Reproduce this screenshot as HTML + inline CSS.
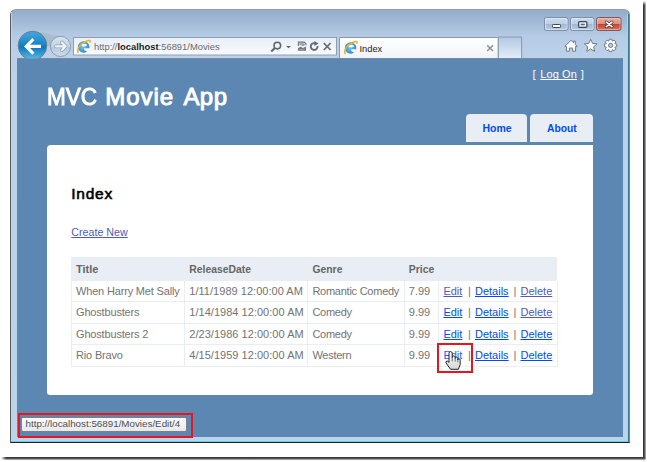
<!DOCTYPE html>
<html><head><meta charset="utf-8">
<style>
*{margin:0;padding:0;box-sizing:border-box}
html,body{width:647px;height:462px;overflow:hidden;background:#fff;font-family:"Liberation Sans",sans-serif}
.a{position:absolute}
.t{position:absolute;white-space:nowrap;line-height:1}
u{text-decoration:underline;text-decoration-skip-ink:none}
#shadowR{left:643px;top:1px;width:3px;height:460px;background:linear-gradient(to right,#2e2e2e 0,#4a4a4a 45%,#c4c4c4 100%);-webkit-mask-image:linear-gradient(to bottom,transparent 0,#000 4px,#000 calc(100% - 3px),transparent 100%)}
#shadowB{left:1px;top:457px;width:645px;height:3px;background:linear-gradient(to bottom,#2e2e2e 0,#4a4a4a 45%,#c4c4c4 100%);-webkit-mask-image:linear-gradient(to right,transparent 0,#000 5px,#000 calc(100% - 3px),transparent 100%)}
#win{left:10px;top:9px;width:620px;height:434px;border:1px solid #5a5a5a;border-top-color:#9a9a9a;border-right-color:#7d8a90;border-bottom-color:#222;border-radius:6px 6px 0 0;
 background:linear-gradient(to bottom,#a4b0bd 0,#93adcb 1px,#a8bfda 16px,#b6cce6 27px,#bcd2ea 48px,#bcd3ec 100%)}
#cyan{left:11px;top:441px;width:618px;height:1px;background:#5fd2ee}
#content{left:17px;top:59px;width:606px;height:378px;background:#5c87b2}
#ctop{left:17px;top:58px;width:606px;height:1px;background:#7689a0}
#main{left:47px;top:145px;width:546px;height:250px;background:#fff;border-radius:4px 0 3px 3px}
.tab{background:#e8eef4;border-radius:4px 4px 0 0}

</style></head><body>
<div class="a" id="shadowR"></div>
<div class="a" id="shadowB"></div>
<div class="a" id="win"></div>
<div class="a" id="cyan"></div>
<div class="a" style="left:11px;top:12px;width:1px;height:429px;background:#c9d0d8"></div>
<div class="a" style="left:628px;top:14px;width:1px;height:428px;background:#2f7d93"></div>
<div class="a" style="left:627px;top:14px;width:1px;height:427px;background:#b0d4ef"></div>
<div class="a" id="ctop"></div>
<div class="a" id="content"></div>
<div class="a" id="main"></div>
<svg class="a" style="left:0;top:0" width="647" height="60" viewBox="0 0 647 60">
 <defs>
  <linearGradient id="gBack" x1="0" y1="0" x2="0" y2="1">
   <stop offset="0" stop-color="#4aa6dc"/><stop offset="0.45" stop-color="#1b86c8"/><stop offset="0.55" stop-color="#0b78c0"/><stop offset="1" stop-color="#5cbde6"/>
  </linearGradient>
  <linearGradient id="gFwd" x1="0" y1="0" x2="0" y2="1">
   <stop offset="0" stop-color="#d8e4f0"/><stop offset="0.5" stop-color="#c3d4e6"/><stop offset="0.55" stop-color="#b4c8de"/><stop offset="1" stop-color="#cfdeee"/>
  </linearGradient>
  <linearGradient id="gAddr" x1="0" y1="0" x2="0" y2="1">
   <stop offset="0" stop-color="#e9eff7"/><stop offset="1" stop-color="#f8fafd"/>
  </linearGradient>
  <linearGradient id="gTab" x1="0" y1="0" x2="0" y2="1">
   <stop offset="0" stop-color="#ffffff"/><stop offset="1" stop-color="#f1f4f8"/>
  </linearGradient>
  <linearGradient id="gNew" x1="0" y1="0" x2="0" y2="1">
   <stop offset="0" stop-color="#b2c9e4"/><stop offset="1" stop-color="#e2ecf7"/>
  </linearGradient>
  <linearGradient id="gBtn" x1="0" y1="0" x2="0" y2="1">
   <stop offset="0" stop-color="#cfdcec"/><stop offset="0.5" stop-color="#bccfe5"/><stop offset="0.52" stop-color="#9fb8d4"/><stop offset="1" stop-color="#b9cde4"/>
  </linearGradient>
  <linearGradient id="gClose" x1="0" y1="0" x2="0" y2="1">
   <stop offset="0" stop-color="#e9b4a6"/><stop offset="0.5" stop-color="#dc8f7c"/><stop offset="0.52" stop-color="#c4432a"/><stop offset="1" stop-color="#dc7a62"/>
  </linearGradient>
  <radialGradient id="gIE" cx="0.45" cy="0.45" r="0.6"><stop offset="0" stop-color="#7cc8f0"/><stop offset="1" stop-color="#1f86d2"/></radialGradient>
  <clipPath id="cTop"><rect x="0" y="0" width="647" height="58.5"/></clipPath>
 </defs>
 <g clip-path="url(#cTop)">
  <!-- connector between back and forward -->
  <path d="M33,31.2 C43,31.3 51,35.5 60.5,36.2 L60.5,46.4 L50.4,46.4 L46.8,45.6 Z" fill="#a9b9cb" opacity="0.9"/>
  <circle cx="60.5" cy="46.4" r="10.1" fill="url(#gFwd)" stroke="#8d9bab" stroke-width="1"/>
  <path d="M56,46.3 H65.5 M61.8,42.4 L65.6,46.3 L61.8,50.2" fill="none" stroke="#8e9eb0" stroke-width="3.6" stroke-linecap="round" stroke-linejoin="round"/>
  <path d="M56,46.3 H65.5 M61.8,42.4 L65.6,46.3 L61.8,50.2" fill="none" stroke="#eef3f8" stroke-width="2.2" stroke-linecap="round" stroke-linejoin="round"/>
  <circle cx="32.5" cy="45.6" r="14.3" fill="url(#gBack)" stroke="#6b7c8e" stroke-width="1"/>
  <path d="M26,46.4 H41 M33.4,39.2 L26.2,46.4 L33.4,53.6" fill="none" stroke="#fff" stroke-width="3.1" stroke-linejoin="miter"/>
 </g>
 <!-- address bar -->
 <rect x="73.5" y="37.5" width="263" height="17.5" fill="url(#gAddr)" stroke="#8f9fb2" stroke-width="1"/>
 <!-- IE icon in addr -->
 <g id="ieico">
  <circle cx="83.6" cy="47" r="5.8" fill="url(#gIE)"/>
  <ellipse cx="84.1" cy="45.1" rx="2.9" ry="1.3" fill="#f2f8fd"/>
  <path d="M84.2,48.3 H90.4 V51 Q87.5,53 84.2,50 Z" fill="#f3f6fa"/>
  <path d="M78,52.6 C76.6,48.6 80.6,42.6 88.4,40.6 C89.9,40.2 90.6,40.9 89.9,42.1" fill="none" stroke="#f1b01e" stroke-width="1.5" stroke-linecap="round"/>
 </g>
<!-- search etc -->
 <g fill="none" stroke="#5e6670" stroke-width="1.6">
  <circle cx="277.3" cy="45.6" r="3.3"/>
  <path d="M275,48 L271.2,51.6" stroke-width="2"/>
 </g>
 <path d="M286,46 H291 L288.5,48.2 Z" fill="#5e6670"/>
 <!-- compat view -->
 <path d="M298.4,46 V42.1 H304.2 L305.9,43.8 V45.2" stroke="#6a727c" stroke-width="1.1" fill="none"/>
 <path d="M299.4,43.3 H303.8 L304.8,44.2 V45.2 L303,46.2 L300.5,44.9 L299.4,45.6 Z" fill="#9aa0a8"/>
 <path d="M298,48.3 L300.5,46.7 L303,48.1 L306,46.4 V50.8 H298 Z" fill="#6a727c"/>
 <path d="M299.3,49.3 H304.7" stroke="#aeb3b9" stroke-width="0.8"/>
 <!-- refresh -->
 <path d="M317.5,46 A3.4,3.4 0 1 1 314.8,43.2" fill="none" stroke="#646b74" stroke-width="1.9"/>
 <path d="M314.3,41.1 L318.6,43.6 L314.3,46.1 Z" fill="#646b74"/>
 <!-- stop -->
 <path d="M323.8,43 L330.6,50 M330.6,43 L323.8,50" stroke="#646b74" stroke-width="1.7"/>
 <!-- tab -->
 <path d="M339.5,58 V38 Q339.5,37.5 340,37.5 H497.8 Q498.3,37.5 498.3,38 V58" fill="url(#gTab)" stroke="#8a98a8" stroke-width="1"/>
 <g transform="translate(267,1)">
  <circle cx="83.6" cy="47" r="5.8" fill="url(#gIE)"/>
  <ellipse cx="84.1" cy="45.1" rx="2.9" ry="1.3" fill="#f2f8fd"/>
  <path d="M84.2,48.3 H90.4 V51 Q87.5,53 84.2,50 Z" fill="#f3f6fa"/>
  <path d="M78,52.6 C76.6,48.6 80.6,42.6 88.4,40.6 C89.9,40.2 90.6,40.9 89.9,42.1" fill="none" stroke="#f1b01e" stroke-width="1.5" stroke-linecap="round"/>
 </g>
 <path d="M487.2,45.3 L493,51 M493,45.3 L487.2,51" stroke="#8f8f8f" stroke-width="1.5"/>
 <!-- new tab -->
 <path d="M498.3,58 V37 H521.6 V58" fill="url(#gNew)" stroke="#8a98a8" stroke-width="1"/>
 <!-- window buttons -->
 <rect x="544.5" y="17.5" width="23.5" height="13" rx="2" fill="url(#gBtn)" stroke="#7b8ea6" stroke-width="1"/>
 <rect x="545.5" y="18.5" width="21.5" height="11" rx="1.5" fill="none" stroke="#e4edf7" stroke-width="0.8" opacity="0.8"/>
 <rect x="570.5" y="17.5" width="23.5" height="13" rx="2" fill="url(#gBtn)" stroke="#7b8ea6" stroke-width="1"/>
 <rect x="571.5" y="18.5" width="21.5" height="11" rx="1.5" fill="none" stroke="#e4edf7" stroke-width="0.8" opacity="0.8"/>
 <rect x="596.5" y="17.5" width="24.5" height="13" rx="2" fill="url(#gClose)" stroke="#7d5864" stroke-width="1"/>
 <rect x="597.5" y="18.5" width="22.5" height="11" rx="1.5" fill="none" stroke="#f0c8bd" stroke-width="0.8" opacity="0.7"/>
 <rect x="552.5" y="24.5" width="8" height="3" rx="0.8" fill="#fff" stroke="#3e4852" stroke-width="1"/>
 <rect x="578.5" y="21.5" width="8.5" height="6" rx="0.8" fill="#3f5a78" stroke="#3e4852" stroke-width="1"/>
 <rect x="580" y="23" width="5.5" height="3" fill="#4d6c8f" stroke="#fff" stroke-width="1.3"/>
 <path d="M606.3,22.2 L612,26.6 M612,22.2 L606.3,26.6" stroke="#4a3036" stroke-width="3.0" stroke-linecap="round"/>
 <path d="M606.3,22.2 L612,26.6 M612,22.2 L606.3,26.6" stroke="#fff" stroke-width="1.7" stroke-linecap="round"/>
 <!-- home star gear -->
 <g fill="#fff" stroke="#6f7b88" stroke-width="1" stroke-linejoin="round" fill-rule="evenodd">
  <path d="M564.8,46.4 L571,40.3 L573.6,42.8 L573.6,41 L575.3,41 L575.3,44.5 L577.2,46.4 L575.6,46.4 L575.6,51.2 L572.6,51.2 L572.6,48 L569.4,48 L569.4,51.2 L566.4,51.2 L566.4,46.4 Z"/>
  <path d="M590.70,39.20 L592.52,43.39 L597.07,43.83 L593.65,46.86 L594.64,51.32 L590.70,49.00 L586.76,51.32 L587.75,46.86 L584.33,43.83 L588.88,43.39 Z"/>
  <path d="M608.94,41.00 L609.35,39.23 L611.85,39.23 L612.26,41.00 L612.54,41.12 L614.08,40.15 L615.85,41.92 L614.88,43.46 L615.00,43.74 L616.77,44.15 L616.77,46.65 L615.00,47.06 L614.88,47.34 L615.85,48.88 L614.08,50.65 L612.54,49.68 L612.26,49.80 L611.85,51.57 L609.35,51.57 L608.94,49.80 L608.66,49.68 L607.12,50.65 L605.35,48.88 L606.32,47.34 L606.20,47.06 L604.43,46.65 L604.43,44.15 L606.20,43.74 L606.32,43.46 L605.35,41.92 L607.12,40.15 L608.66,41.12 Z M612.7,45.4 A2.1,2.1 0 1 0 608.5,45.4 A2.1,2.1 0 1 0 612.7,45.4 Z"/>
 </g>
</svg>

<div class="t" style="left:46.9px;top:84.68px;font-size:24px;color:#fff;-webkit-text-stroke:0.95px #fff;transform:scaleX(0.94);transform-origin:0 0;">MVC</div>
<div class="t" style="left:105.2px;top:84.68px;font-size:24px;color:#fff;letter-spacing:0.95px;-webkit-text-stroke:0.95px #fff;">Movie</div>
<div class="t" style="left:183.4px;top:84.68px;font-size:24px;color:#fff;letter-spacing:0.45px;-webkit-text-stroke:0.95px #fff;">App</div>
<div class="t" style="left:532.6px;top:68.48px;font-size:11.6px;color:#f4f7fb;">[</div>
<div class="t" style="left:540.3px;top:68.69px;font-size:11px;color:#fff;letter-spacing:0.1px;"><u>Log On</u></div>
<div class="t" style="left:580.8px;top:68.48px;font-size:11.6px;color:#f4f7fb;">]</div>
<div class="a tab" style="left:466px;top:114px;width:61px;height:28px"></div>
<div class="a tab" style="left:530px;top:114px;width:63px;height:28px"></div>
<div class="t" id="home" style="left:482.5px;top:123.11px;font-size:10.5px;color:#034af3;font-weight:bold;">Home</div>
<div class="t" id="about" style="left:547px;top:123.68px;font-size:10.3px;color:#034af3;font-weight:bold;">About</div>
<div class="t" id="h2" style="left:71.3px;top:185.88px;font-size:15.5px;color:#000;letter-spacing:0.75px;-webkit-text-stroke:0.6px #000;">Index</div>
<div class="t" id="create" style="left:71.3px;top:227.34px;font-size:10.7px;color:#505abc;"><u>Create New</u></div>
<div class="a" style="left:71px;top:257px;width:486px;height:23.5px;background:#e8eef4"></div>
<div class="a" style="left:71px;top:280.0px;width:486px;height:1px;background:#e8eef4"></div>
<div class="a" style="left:71px;top:301.0px;width:486px;height:1px;background:#e8eef4"></div>
<div class="a" style="left:71px;top:323.0px;width:486px;height:1px;background:#e8eef4"></div>
<div class="a" style="left:71px;top:344.0px;width:486px;height:1px;background:#e8eef4"></div>
<div class="a" style="left:71px;top:366.0px;width:486px;height:1px;background:#e8eef4"></div>
<div class="a" style="left:71.0px;top:280.5px;width:1px;height:86.0px;background:#e8eef4"></div>
<div class="a" style="left:184.0px;top:280.5px;width:1px;height:86.0px;background:#e8eef4"></div>
<div class="a" style="left:307.0px;top:280.5px;width:1px;height:86.0px;background:#e8eef4"></div>
<div class="a" style="left:404.0px;top:280.5px;width:1px;height:86.0px;background:#e8eef4"></div>
<div class="a" style="left:438.0px;top:280.5px;width:1px;height:86.0px;background:#e8eef4"></div>
<div class="a" style="left:557.0px;top:280.5px;width:1px;height:86.0px;background:#e8eef4"></div>
<div class="t" style="left:76px;top:263.99px;font-size:11px;color:#666;font-weight:bold;">Title</div>
<div class="t" style="left:189.3px;top:264.50px;font-size:10.4px;color:#666;font-weight:bold;">ReleaseDate</div>
<div class="t" style="left:312.4px;top:264.50px;font-size:10.4px;color:#666;font-weight:bold;">Genre</div>
<div class="t" style="left:408.8px;top:264.50px;font-size:10.4px;color:#666;font-weight:bold;">Price</div>
<div class="t" style="left:76px;top:285.59px;font-size:11px;color:#737373;letter-spacing:-0.17px;">When Harry Met Sally</div>
<div class="t" style="left:189.3px;top:285.59px;font-size:11px;color:#737373;letter-spacing:0.03px;">1/11/1989 12:00:00 AM</div>
<div class="t" style="left:312.4px;top:285.59px;font-size:11px;color:#737373;letter-spacing:-0.25px;">Romantic Comedy</div>
<div class="t" style="left:408.8px;top:285.59px;font-size:11px;color:#737373;">7.99</div>
<div class="t" style="left:443.4px;top:285.59px;font-size:11px;color:#505abc;"><u>Edit</u></div>
<div class="t" style="left:468px;top:285.59px;font-size:11px;color:#737373;">|</div>
<div class="t" style="left:475px;top:285.59px;font-size:11px;color:#034af3;"><u>Details</u></div>
<div class="t" style="left:513.4px;top:285.59px;font-size:11px;color:#737373;">|</div>
<div class="t" style="left:520.5px;top:285.59px;font-size:11px;color:#505abc;"><u>Delete</u></div>
<div class="t" style="left:76px;top:307.29px;font-size:11px;color:#737373;letter-spacing:-0.17px;">Ghostbusters</div>
<div class="t" style="left:189.3px;top:307.29px;font-size:11px;color:#737373;letter-spacing:0.03px;">1/14/1984 12:00:00 AM</div>
<div class="t" style="left:312.4px;top:307.29px;font-size:11px;color:#737373;letter-spacing:-0.25px;">Comedy</div>
<div class="t" style="left:408.8px;top:307.29px;font-size:11px;color:#737373;">9.99</div>
<div class="t" style="left:443.4px;top:307.29px;font-size:11px;color:#034af3;"><u>Edit</u></div>
<div class="t" style="left:468px;top:307.29px;font-size:11px;color:#737373;">|</div>
<div class="t" style="left:475px;top:307.29px;font-size:11px;color:#034af3;"><u>Details</u></div>
<div class="t" style="left:513.4px;top:307.29px;font-size:11px;color:#737373;">|</div>
<div class="t" style="left:520.5px;top:307.29px;font-size:11px;color:#505abc;"><u>Delete</u></div>
<div class="t" style="left:76px;top:328.69px;font-size:11px;color:#737373;letter-spacing:-0.17px;">Ghostbusters 2</div>
<div class="t" style="left:189.3px;top:328.69px;font-size:11px;color:#737373;letter-spacing:0.03px;">2/23/1986 12:00:00 AM</div>
<div class="t" style="left:312.4px;top:328.69px;font-size:11px;color:#737373;letter-spacing:-0.25px;">Comedy</div>
<div class="t" style="left:408.8px;top:328.69px;font-size:11px;color:#737373;">9.99</div>
<div class="t" style="left:443.4px;top:328.69px;font-size:11px;color:#034af3;"><u>Edit</u></div>
<div class="t" style="left:468px;top:328.69px;font-size:11px;color:#737373;">|</div>
<div class="t" style="left:475px;top:328.69px;font-size:11px;color:#034af3;"><u>Details</u></div>
<div class="t" style="left:513.4px;top:328.69px;font-size:11px;color:#737373;">|</div>
<div class="t" style="left:520.5px;top:328.69px;font-size:11px;color:#034af3;"><u>Delete</u></div>
<div class="t" style="left:76px;top:350.09px;font-size:11px;color:#737373;letter-spacing:-0.17px;">Rio Bravo</div>
<div class="t" style="left:189.3px;top:350.09px;font-size:11px;color:#737373;letter-spacing:0.03px;">4/15/1959 12:00:00 AM</div>
<div class="t" style="left:312.4px;top:350.09px;font-size:11px;color:#737373;letter-spacing:-0.25px;">Western</div>
<div class="t" style="left:408.8px;top:350.09px;font-size:11px;color:#737373;">9.99</div>
<div class="t" style="left:443.4px;top:350.09px;font-size:11px;color:#1d60ff;">Edit</div>
<div class="t" style="left:468px;top:350.09px;font-size:11px;color:#737373;">|</div>
<div class="t" style="left:475px;top:350.09px;font-size:11px;color:#034af3;"><u>Details</u></div>
<div class="t" style="left:513.4px;top:350.09px;font-size:11px;color:#737373;">|</div>
<div class="t" style="left:520.5px;top:350.09px;font-size:11px;color:#034af3;"><u>Delete</u></div>

<div class="t" style="left:94px;top:42.2px;font-size:9.4px;line-height:9.4px;color:#6a6a6a">http://<span style="color:#1e1e1e;font-weight:bold">localhost</span>:56891/Movies</div>
<div class="t" style="left:359.5px;top:44.5px;font-size:9.3px;line-height:9.3px;color:#1a1a1a">Index</div>
<div class="a" style="left:18px;top:413px;width:175px;height:25px;border:2.6px solid #e8141e"></div>
<div class="a" style="left:21px;top:417px;width:166px;height:15px;border:1px solid #7e8084;border-radius:2px;background:linear-gradient(#fdfdfe,#e6e8ec)"></div>
<div class="t" style="left:25.5px;top:419.3px;font-size:9.8px;line-height:9.8px;color:#4e4e4e">http://localhost:56891/Movies/Edit/4</div>
<div class="a" style="left:437px;top:343px;width:36px;height:30px;border:2.7px solid #e8141e"></div>
<svg class="a" style="left:0;top:0" width="647" height="462" viewBox="0 0 647 462">
 <defs><linearGradient id="gHand" x1="0" y1="0" x2="0" y2="1"><stop offset="0" stop-color="#fff"/><stop offset="1" stop-color="#d6d6d6"/></linearGradient></defs>
 <path d="M449,353.2 Q449,351.6 450.6,351.6 Q452.2,351.6 452.2,353.2 L452.2,357.4 Q452.2,356 453.7,356 Q455.2,356 455.2,357.4 L455.2,358.4 Q455.2,357.2 456.5,357.2 Q457.8,357.2 457.8,358.6 L457.8,359.9 Q457.8,358.8 459,358.8 Q460.2,358.8 460.2,360.2 L460.2,364.5 L458.4,369.3 L450.6,369.3 L446,363 Q445.4,361.2 447.2,361 L449,362.4 Z" fill="url(#gHand)" stroke="#1a1a1a" stroke-width="0.95" stroke-linejoin="round"/>
 <path d="M452.2,357.2 V361.3 M455.2,358.3 V361.6 M457.8,359.8 V362.3" stroke="#333" stroke-width="0.7" fill="none"/>
</svg>

</body></html>
